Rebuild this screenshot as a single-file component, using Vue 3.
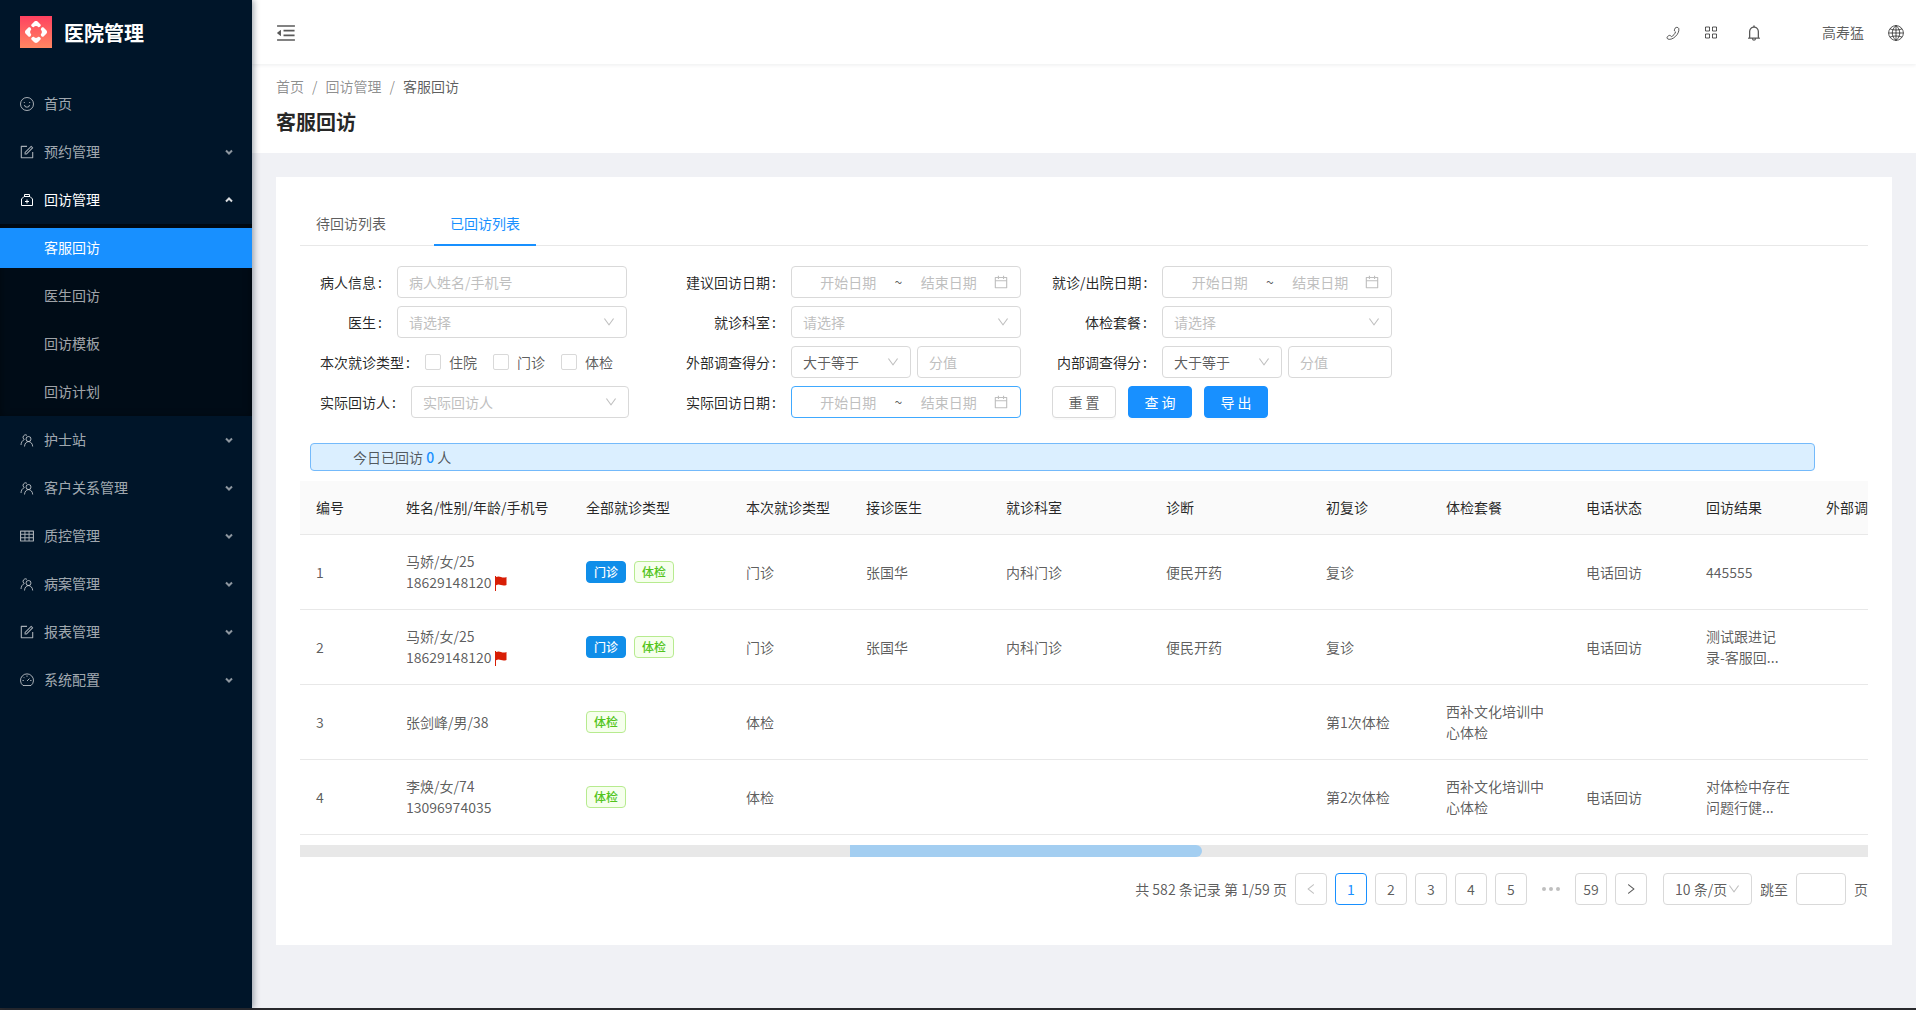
<script setup>
import { ref } from "vue";

const icons = {
  down: "M884 256h-75c-5.1 0-9.9 2.5-12.9 6.6L512 654.2 227.9 262.6c-3-4.1-7.8-6.6-12.9-6.6h-75c-6.5 0-10.3 7.4-6.5 12.7l352.6 486.1c12.8 17.6 39 17.6 51.7 0l352.6-486.1c3.9-5.3.1-12.7-6.4-12.7z",
  left: "M724 218.3V141c0-6.7-7.7-10.4-12.9-6.3L260.3 486.8c-16.4 12.8-16.4 37.5 0 50.3l450.8 352.1c5.3 4.1 12.9.4 12.9-6.3v-77.3c0-4.9-2.3-9.6-6.1-12.6l-360-281 360-281.1c3.8-3 6.1-7.7 6.1-12.6z",
  right:
    "M765.7 486.8L314.9 134.7A7.97 7.97 0 0 0 302 141v77.3c0 4.9 2.3 9.6 6.1 12.6l360 281.1-360 281.1c-3.9 3-6.1 7.7-6.1 12.6V883c0 6.7 7.7 10.4 12.9 6.3l450.8-352.1a31.96 31.96 0 0 0 0-50.4z",
  calendar:
    "M880 184H712v-64c0-4.4-3.6-8-8-8h-56c-4.4 0-8 3.6-8 8v64H384v-64c0-4.4-3.6-8-8-8h-56c-4.4 0-8 3.6-8 8v64H144c-17.7 0-32 14.3-32 32v664c0 17.7 14.3 32 32 32h736c17.7 0 32-14.3 32-32V216c0-17.7-14.3-32-32-32zm-40 656H184V460h656v380zM184 392V256h128v48c0 4.4 3.6 8 8 8h56c4.4 0 8-3.6 8-8v-48h256v48c0 4.4 3.6 8 8 8h56c4.4 0 8-3.6 8-8v-48h128v136H184z",
  fold: "M408 442h480c4.4 0 8-3.6 8-8v-56c0-4.4-3.6-8-8-8H408c-4.4 0-8 3.6-8 8v56c0 4.4 3.6 8 8 8zm-8 204c0 4.4 3.6 8 8 8h480c4.4 0 8-3.6 8-8v-56c0-4.4-3.6-8-8-8H408c-4.4 0-8 3.6-8 8v56zm504-486H120c-4.4 0-8 3.6-8 8v56c0 4.4 3.6 8 8 8h784c4.4 0 8-3.6 8-8v-56c0-4.4-3.6-8-8-8zm0 632H120c-4.4 0-8 3.6-8 8v56c0 4.4 3.6 8 8 8h784c4.4 0 8-3.6 8-8v-56c0-4.4-3.6-8-8-8zM115.4 518.9L271.7 642c5.8 4.6 14.4.5 14.4-6.9V388.9c0-7.4-8.5-11.5-14.4-6.9L115.4 505.1a8.74 8.74 0 0 0 0 13.8z",
  bell: "M816 768h-24V428c0-141.1-104.3-257.7-240-277.1V112c0-22.1-17.9-40-40-40s-40 17.9-40 40v38.9c-135.7 19.4-240 136-240 277.1v340h-24c-17.7 0-32 14.3-32 32v32c0 4.4 3.6 8 8 8h216c0 61.8 50.2 112 112 112s112-50.2 112-112h216c4.4 0 8-3.6 8-8v-32c0-17.7-14.3-32-32-32zM512 888c-26.5 0-48-21.5-48-48h96c0 26.5-21.5 48-48 48zM304 768V428c0-55.6 21.6-107.8 60.9-147.1S456.4 220 512 220c55.6 0 107.8 21.6 147.1 60.9S720 372.4 720 428v340H304z",
  form: "M904 512h-56c-4.4 0-8 3.6-8 8v320H184V184h320c4.4 0 8-3.6 8-8v-56c0-4.4-3.6-8-8-8H144c-17.7 0-32 14.3-32 32v736c0 17.7 14.3 32 32 32h736c17.7 0 32-14.3 32-32V520c0-4.4-3.6-8-8-8z M355.9 534.9L354 653.8c-.1 8.9 7.1 16.2 16 16.2h.4l118-2.9c2-.1 4-.9 5.4-2.3l415.9-415c3.1-3.1 3.1-8.2 0-11.3L785.4 114.3c-1.6-1.6-3.6-2.3-5.7-2.3s-4.1.8-5.7 2.3l-415.8 415a8.3 8.3 0 0 0-2.3 5.6zm63.5 23.6L779.7 199l45.2 45.1-360.5 359.7-45.7 1.1.7-46.4z",
  table:
    "M928 160H96c-17.7 0-32 14.3-32 32v640c0 17.7 14.3 32 32 32h832c17.7 0 32-14.3 32-32V192c0-17.7-14.3-32-32-32zm-40 208H676V232h212v136zm0 224H676V432h212v160zM412 432h200v160H412V432zm200-64H412V232h200v136zm-476 64h212v160H136V432zm0-200h212v136H136V232zm0 424h212v136H136V656zm276 0h200v136H412V656zm476 136H676V656h212v136z",
};

// icons drawn with strokes on a 14x14 grid
const lineIcons = {
  smile: "M7 .5a6.5 6.5 0 1 0 0 13a6.5 6.5 0 1 0 0-13z M4.3 5v1 M9.7 5v1 M4.5 8a2.5 2.2 0 0 0 5 0",
  medicine: "M1.5 12.5V6L4 3.5h6L12.5 6v6.5z M4.5 3.5v-2h5v2 M7 6.5v4 M5 8.5h4",
  team: "M8.5 3.5a2.5 2.5 0 1 0 0 5a2.5 2.5 0 1 0 0-5z M4.5 13.5c.2-3 1.8-4.9 4-4.9s4 1.900 4.200 4.900 M7 2.300a2.500 2.500 0 1 0-2.700 4.200C2.200 7.500 1.100 9.500 1 12",
  dashboard:
    "M3 12.500a6.500 6.500 0 1 1 8 0z M7 8l2.500-2.500 M7 2.500v1.300 M2.500 7.500h1.300 M10.200 7.500h1.300 M3.800 4.300l.8.8",
};

const menus = ref([
  { name: "首页", icon: "smile" },
  { name: "预约管理", icon: "form", sub: [] },
  {
    name: "回访管理",
    icon: "medicine",
    open: true,
    sub: ["客服回访", "医生回访", "回访模板", "回访计划"],
  },
  { name: "护士站", icon: "team", sub: [] },
  { name: "客户关系管理", icon: "team", sub: [] },
  { name: "质控管理", icon: "table", sub: [] },
  { name: "病案管理", icon: "team", sub: [] },
  { name: "报表管理", icon: "form", sub: [] },
  { name: "系统配置", icon: "dashboard", sub: [] },
]);
const activeMenu = ref("客服回访");

const tabs = ["待回访列表", "已回访列表"];
const activeTab = ref("已回访列表");

const filters = [
  { id: "patient", label: "病人信息", type: "input", placeholder: "病人姓名/手机号" },
  { id: "advise", label: "建议回访日期", type: "range" },
  { id: "visitDate", label: "就诊/出院日期", type: "range" },
  { id: "doctor", label: "医生", type: "select", placeholder: "请选择" },
  { id: "dept", label: "就诊科室", type: "select", placeholder: "请选择" },
  { id: "package", label: "体检套餐", type: "select", placeholder: "请选择" },
  { id: "visitType", label: "本次就诊类型", type: "checks", options: ["住院", "门诊", "体检"] },
  { id: "outer", label: "外部调查得分", type: "score" },
  { id: "inner", label: "内部调查得分", type: "score" },
  { id: "visitor", label: "实际回访人", type: "select", placeholder: "实际回访人" },
  { id: "realDate", label: "实际回访日期", type: "range", focused: true },
];

const columns = [
  { title: "编号", width: 90 },
  { title: "姓名/性别/年龄/手机号", width: 180 },
  { title: "全部就诊类型", width: 160 },
  { title: "本次就诊类型", width: 120 },
  { title: "接诊医生", width: 140 },
  { title: "就诊科室", width: 160 },
  { title: "诊断", width: 160 },
  { title: "初复诊", width: 120 },
  { title: "体检套餐", width: 140 },
  { title: "电话状态", width: 120 },
  { title: "回访结果", width: 120 },
  { title: "外部调查得分", width: 120 },
];

const rows = [
  {
    id: 1,
    name: "马娇/女/25",
    phone: "18629148120",
    flag: true,
    tags: ["门诊", "体检"],
    cells: ["门诊", "张国华", "内科门诊", "便民开药", "复诊", "", "电话回访", "445555", ""],
  },
  {
    id: 2,
    name: "马娇/女/25",
    phone: "18629148120",
    flag: true,
    tags: ["门诊", "体检"],
    cells: ["门诊", "张国华", "内科门诊", "便民开药", "复诊", "", "电话回访", "测试跟进记\n录-客服回...", ""],
  },
  {
    id: 3,
    name: "张剑峰/男/38",
    tags: ["体检"],
    cells: ["体检", "", "", "", "第1次体检", "西补文化培训中心体检", "", "", ""],
  },
  {
    id: 4,
    name: "李焕/女/74",
    phone: "13096974035",
    tags: ["体检"],
    cells: ["体检", "", "", "", "第2次体检", "西补文化培训中心体检", "电话回访", "对体检中存在\n问题行健...", ""],
  },
];

const page = ref(1);

function toggle(menu) {
  if (menu.sub) menu.open = !menu.open;
}
</script>

<template>
  <div class="layout">
    <aside class="sider">
      <div class="logo">
        <svg width="32" height="32" viewBox="0 0 32 32" aria-hidden="true">
          <defs>
            <linearGradient id="logo-bg" x1="0" y1="0" x2="0" y2="1">
              <stop offset="0" stop-color="#ff4160" />
              <stop offset="1" stop-color="#ff8762" />
            </linearGradient>
          </defs>
          <rect width="32" height="32" fill="url(#logo-bg)" />
          <g fill="#fff">
            <path
              v-for="deg in [0, 90, 180, 270]"
              :key="deg"
              :transform="`rotate(${deg} 16 16)`"
              d="M16 5c-1 0-1.600.5-2.300 1.200l-2 2c-.7.7-.6 1.500-.1 2.100c.5.600 1.300.900 2.100.900c.5-.7 1.300-1.100 2.300-1.100s1.800.4 2.300 1.100c.8 0 1.600-.3 2.100-.9c.5-.6.6-1.400-.1-2.100l-2-2C17.600 5.500 17 5 16 5z"
            />
          </g>
        </svg>
        <h1>医院管理</h1>
      </div>
      <nav class="menu">
        <template v-for="menu in menus" :key="menu.name">
          <button class="menu-item" :class="{ open: menu.open }" @click="toggle(menu)">
            <svg v-if="lineIcons[menu.icon]" class="line" width="14" height="14" viewBox="0 0 14 14">
              <path :d="lineIcons[menu.icon]" />
            </svg>
            <svg v-else width="14" height="14" viewBox="64 64 896 896">
              <path :d="icons[menu.icon]" />
            </svg>
            <span>{{ menu.name }}</span>
            <svg v-if="menu.sub" class="arrow" width="8" height="6" viewBox="0 0 8 6">
              <path :d="menu.open ? 'M1 4.500l3-3 3 3' : 'M1 1.500l3 3 3-3'" />
            </svg>
          </button>
          <div v-if="menu.open" class="submenu">
            <a
              v-for="item in menu.sub"
              :key="item"
              href="#"
              :class="{ active: item === activeMenu }"
              @click.prevent="activeMenu = item"
              >{{ item }}</a
            >
          </div>
        </template>
      </nav>
    </aside>

    <div class="main">
      <header class="topbar">
        <button class="icon-btn" aria-label="收起菜单">
          <svg width="20" height="20" viewBox="64 64 896 896"><path :d="icons.fold" /></svg>
        </button>
        <div class="tools">
          <button class="icon-btn phone" aria-label="电话">
            <svg class="line" width="14" height="14" viewBox="0 0 14 14">
              <path
                d="M9.500 1.700c1-.6 2.600-.4 3.200.6c.7 2.400-.6 5.700-3.200 8.100c-2.500 2.400-5.300 3.500-7.500 2.700c-1-.5-1.200-1.500-.7-2.300l1.500-1.200c.6-.4 1.300-.3 1.800.2l.9.8c2-1 3.400-2.600 4-4.700l-.8-.8c-.5-.6-.5-1.200-.1-1.800z"
              />
            </svg>
          </button>
          <button class="icon-btn apps" aria-label="应用">
            <svg class="line" width="14" height="14" viewBox="0 0 14 14">
              <path d="M1.500 1h4v4h-4z M8.500 1h4v4h-4z M1.500 8h4v4h-4z M8.500 8h4v4h-4z" />
            </svg>
          </button>
          <button class="icon-btn bell" aria-label="通知">
            <svg width="16" height="16" viewBox="64 64 896 896"><path :d="icons.bell" /></svg>
          </button>
          <span class="user">高寿猛</span>
          <button class="icon-btn" aria-label="语言">
            <svg class="line" width="16" height="16" viewBox="0 0 16 16">
              <path
                d="M8 .6a7.400 7.400 0 1 0 0 14.800A7.400 7.400 0 1 0 8 .6z M8 .6v14.800 M.6 8h14.800 M8 .6c-5 4.400-5 10.400 0 14.800 M8 .6c5 4.400 5 10.400 0 14.800 M2 3.900c3.500 1.500 8.500 1.500 12 0 M2 12.100c3.500-1.500 8.500-1.500 12 0"
              />
            </svg>
          </button>
        </div>
      </header>

      <section class="page-header">
        <nav class="breadcrumb">
          <a href="#">首页</a><i>/</i><a href="#">回访管理</a><i>/</i><span>客服回访</span>
        </nav>
        <h2>客服回访</h2>
      </section>

      <main class="card">
        <div class="tabs" role="tablist">
          <button
            v-for="tab in tabs"
            :key="tab"
            role="tab"
            :class="{ active: tab === activeTab }"
            :aria-selected="tab === activeTab"
            @click="activeTab = tab"
          >
            {{ tab }}
          </button>
        </div>

        <form class="filters" @submit.prevent>
          <div v-for="f in filters" :key="f.id" class="field">
            <label v-if="f.type !== 'checks'" class="label" :for="f.id">{{ f.label }}</label>
            <span v-else class="label">{{ f.label }}</span>

            <input v-if="f.type === 'input'" :id="f.id" class="box" :placeholder="f.placeholder" />

            <div v-else-if="f.type === 'select'" class="select">
              <select :id="f.id" class="box empty">
                <option>{{ f.placeholder }}</option>
              </select>
              <svg width="12" height="12" viewBox="64 64 896 896"><path :d="icons.down" /></svg>
            </div>

            <div v-else-if="f.type === 'range'" class="box range" :class="{ focused: f.focused }">
              <input :id="f.id" placeholder="开始日期" />
              <span>~</span>
              <input :aria-label="f.label + '结束'" placeholder="结束日期" />
              <svg width="14" height="14" viewBox="64 64 896 896"><path :d="icons.calendar" /></svg>
            </div>

            <div v-else-if="f.type === 'score'" class="score">
              <div class="select">
                <select :id="f.id" class="box">
                  <option>大于等于</option>
                </select>
                <svg width="12" height="12" viewBox="64 64 896 896"><path :d="icons.down" /></svg>
              </div>
              <input class="box" placeholder="分值" :aria-label="f.label + '分值'" />
            </div>

            <div v-else class="checks">
              <label v-for="o in f.options" :key="o"><input type="checkbox" />{{ o }}</label>
            </div>
          </div>
          <div class="actions">
            <button type="reset" class="btn">重 置</button>
            <button type="submit" class="btn primary">查 询</button>
            <button type="button" class="btn primary">导 出</button>
          </div>
        </form>

        <div class="summary">今日已回访 <b>0</b> 人</div>

        <div class="table-wrap">
          <table>
            <colgroup>
              <col v-for="c in columns" :key="c.title" :style="{ width: c.width + 'px' }" />
            </colgroup>
            <thead>
              <tr>
                <th v-for="c in columns" :key="c.title">{{ c.title }}</th>
              </tr>
            </thead>
            <tbody>
              <tr v-for="row in rows" :key="row.id">
                <td>{{ row.id }}</td>
                <td>
                  <div>{{ row.name }}</div>
                  <div v-if="row.phone" class="phone-line">
                    {{ row.phone }}
                    <svg v-if="row.flag" width="12" height="15" viewBox="0 0 12 15">
                      <path d="M0 0h1v1c2-.8 3.500-.6 5 0s3.500.8 5.500 0v8c-2 .9-3.800.7-5.500.1S3 8.300 1 9.200V15H0z" />
                    </svg>
                  </div>
                </td>
                <td>
                  <div class="tags">
                    <span v-for="tag in row.tags" :key="tag" class="tag" :class="{ blue: tag === '门诊' }">{{
                      tag
                    }}</span>
                  </div>
                </td>
                <td v-for="(cell, i) in row.cells" :key="i" class="text">{{ cell }}</td>
              </tr>
            </tbody>
          </table>
        </div>
        <div class="scroll-track"><div class="scroll-thumb"></div></div>

        <div class="pagination">
          <span class="total">共 582 条记录 第 1/59 页</span>
          <button disabled aria-label="上一页">
            <svg width="12" height="12" viewBox="64 64 896 896"><path :d="icons.left" /></svg>
          </button>
          <button v-for="n in 5" :key="n" :class="{ active: n === page }" @click="page = n">{{ n }}</button>
          <span class="ellipsis">
            <svg width="18" height="4" viewBox="0 0 18 4">
              <circle cx="2" cy="2" r="2" />
              <circle cx="9" cy="2" r="2" />
              <circle cx="16" cy="2" r="2" />
            </svg>
          </span>
          <button :class="{ active: page === 59 }" @click="page = 59">59</button>
          <button aria-label="下一页" @click="page++">
            <svg width="12" height="12" viewBox="64 64 896 896"><path :d="icons.right" /></svg>
          </button>
          <div class="select size">
            <select class="box" aria-label="每页条数">
              <option>10 条/页</option>
            </select>
            <svg width="12" height="12" viewBox="64 64 896 896"><path :d="icons.down" /></svg>
          </div>
          <label for="jump">跳至</label>
          <input id="jump" class="box jump" />
          <span>页</span>
        </div>
      </main>
    </div>
  </div>
</template>

<style>
body {
  margin: 0;
}
</style>

<style scoped>
* {
  box-sizing: border-box;
}
.layout {
  display: flex;
  min-height: 100vh;
  border-bottom: 2px solid #29292d;
  background: #f0f1f5;
  color: rgba(0, 0, 0, 0.65);
  font-family: "Noto Sans CJK SC", sans-serif;
  font-size: 14px;
  line-height: 21px;
}
button,
input,
select {
  font: inherit;
  color: inherit;
}
button {
  cursor: pointer;
}
svg {
  fill: currentColor;
  flex: none;
}
svg.line {
  fill: none;
  stroke: currentColor;
  stroke-width: 1;
}

/* sidebar */
.sider {
  position: relative;
  z-index: 2;
  flex: none;
  width: 252px;
  background: #001529;
  box-shadow: 2px 0 6px rgba(0, 21, 41, 0.35);
}
.logo {
  display: flex;
  align-items: center;
  gap: 12px;
  height: 64px;
  padding-left: 20px;
}
.logo h1 {
  margin: 0;
  color: #fff;
  font-size: 20px;
  font-weight: 700;
}
.menu {
  padding-top: 16px;
}
.menu-item {
  display: flex;
  align-items: center;
  gap: 10px;
  width: 100%;
  height: 48px;
  padding: 0 19px 1px 20px;
  border: 0;
  background: none;
  color: rgba(255, 255, 255, 0.65);
}
.menu-item.open {
  color: #fff;
}
.arrow {
  margin-left: auto;
  fill: none;
  stroke: currentColor;
  stroke-width: 2;
  opacity: 0.85;
}
.submenu {
  background: #000c17;
  box-shadow: inset 0 2px 8px rgba(0, 0, 0, 0.45);
  padding: 4px 0;
  display: flex;
  flex-direction: column;
  gap: 8px;
}
.submenu a {
  height: 40px;
  padding-left: 44px;
  line-height: 38px;
  color: rgba(255, 255, 255, 0.65);
  text-decoration: none;
}
.submenu a.active {
  background: #1890ff;
  color: #fff;
}

/* top bar */
.main {
  flex: 1;
  min-width: 0;
}
.topbar {
  position: relative;
  z-index: 1;
  display: flex;
  align-items: center;
  justify-content: space-between;
  height: 64px;
  padding: 2px 12px 0 24px;
  background: #fff;
  box-shadow: 0 1px 4px rgba(0, 21, 41, 0.08);
}
.icon-btn {
  display: flex;
  padding: 0;
  border: 0;
  background: none;
}
.tools {
  display: flex;
  align-items: center;
}
.phone {
  margin-right: 24px;
}
.apps {
  margin-right: 28px;
}
.bell {
  margin-right: 60px;
}
.user {
  margin-right: 24px;
  padding-bottom: 2px;
}
.page-header {
  padding: 11px 24px 15px;
  background: #fff;
}
.breadcrumb {
  line-height: 22px;
}
.breadcrumb a {
  color: rgba(0, 0, 0, 0.45);
  text-decoration: none;
}
.breadcrumb i {
  margin: 0 8px;
  color: rgba(0, 0, 0, 0.45);
  font-style: normal;
}
.page-header h2 {
  margin: 9px 0 0;
  color: rgba(0, 0, 0, 0.85);
  font-size: 20px;
  line-height: 32px;
}
.card {
  margin: 24px;
  padding: 24px 24px 40px;
  background: #fff;
}

/* tabs */
.tabs {
  display: flex;
  gap: 32px;
  border-bottom: 1px solid #e8e8e8;
}
.tabs button {
  height: 45px;
  margin-bottom: -1px;
  padding: 2px 16px 0;
  border: 0;
  border-bottom: 2px solid transparent;
  background: none;
}
.tabs button.active {
  border-color: #1890ff;
  color: #1890ff;
}

/* filters */
.filters {
  display: grid;
  grid-template-columns: repeat(3, minmax(340px, 366px));
  row-gap: 8px;
  margin: 20px 20px 0;
}
.field {
  display: flex;
  align-items: center;
}
.label {
  flex: none;
  min-width: 77px;
  color: rgba(0, 0, 0, 0.85);
  text-align: right;
}
.field:nth-child(3n + 2) .label {
  min-width: 105px;
}
.field:nth-child(3n) .label {
  min-width: 110px;
}
.label::after {
  content: ":";
  margin: 0 15px 0 2px;
}
.box {
  width: 230px;
  height: 32px;
  padding: 0 11px;
  border: 1px solid #d9d9d9;
  border-radius: 4px;
  outline: 0;
  background: #fff;
}
input::placeholder {
  color: #bfbfbf;
}
.select {
  position: relative;
  width: 230px;
}
.select .box {
  width: 100%;
  appearance: none;
}
.select .empty {
  color: #bfbfbf;
}
.select svg {
  position: absolute;
  top: 10px;
  right: 12px;
  color: #bfbfbf;
  pointer-events: none;
}
.field:nth-child(10) .select {
  width: 218px;
}
.range {
  display: flex;
  align-items: center;
  padding-right: 12px;
}
.range input {
  flex: 1;
  min-width: 0;
  padding: 0;
  border: 0;
  outline: 0;
  background: none;
  text-align: center;
}
.range span {
  width: 10px;
  text-align: center;
}
.range svg {
  color: #bfbfbf;
}
.range.focused {
  border-color: #40a9ff;
}
.score {
  display: flex;
  gap: 6px;
  width: 230px;
}
.score .select {
  width: 120px;
}
.score > .box {
  width: 104px;
}
.checks {
  display: flex;
  gap: 16px;
}
.checks label {
  display: flex;
  align-items: center;
  gap: 8px;
}
.checks input {
  width: 16px;
  height: 16px;
  margin: 0;
  border: 1px solid #d9d9d9;
  border-radius: 2px;
  appearance: none;
}
.checks input:checked {
  border-color: #1890ff;
  background: #1890ff;
}
.actions {
  display: flex;
  gap: 12px;
}
.btn {
  width: 64px;
  height: 32px;
  padding: 0;
  border: 1px solid #d9d9d9;
  border-radius: 4px;
  background: #fff;
  box-shadow: 0 2px 0 rgba(0, 0, 0, 0.02);
}
.btn.primary {
  border-color: #1890ff;
  background: #1890ff;
  color: #fff;
}

.summary {
  margin: 25px 53px 10px 10px;
  padding: 0 42px;
  border: 1px solid #74bafb;
  border-radius: 4px;
  background: #dbefff;
  line-height: 26px;
}
.summary b {
  color: #1890ff;
  font-weight: 500;
}

/* table */
.table-wrap {
  overflow: hidden;
}
table {
  width: 1630px;
  table-layout: fixed;
  border-collapse: separate;
  border-spacing: 0;
}
th {
  height: 54px;
  padding: 0 16px;
  border-bottom: 1px solid #e8e8e8;
  background: #fafafa;
  color: rgba(0, 0, 0, 0.85);
  font-weight: 400;
  text-align: left;
  white-space: nowrap;
}
td {
  height: 75px;
  padding: 0 16px;
  border-bottom: 1px solid #e8e8e8;
}
td.text {
  white-space: pre-line;
}
.phone-line {
  display: flex;
  align-items: center;
  gap: 4px;
}
.phone-line svg {
  margin-top: 2px;
  color: #d81e06;
}
.tags {
  display: flex;
  gap: 8px;
}
.tag {
  padding: 0 7px;
  border: 1px solid #b7eb8f;
  border-radius: 4px;
  background: #f6ffed;
  color: #52c41a;
  font-size: 12px;
  font-weight: 500;
  line-height: 20px;
}
.tag.blue {
  border-color: #108ee9;
  background: #108ee9;
  color: #fff;
}
.scroll-track {
  height: 12px;
  margin-top: 10px;
  padding: 0 42.5% 0 35.1%;
  background: #e8e8e8;
}
.scroll-thumb {
  height: 12px;
  border-radius: 0 6px 6px 0;
  background: #a3cef1;
}

.pagination {
  display: flex;
  align-items: center;
  justify-content: flex-end;
  gap: 8px;
  margin-top: 16px;
}
.pagination button {
  display: flex;
  align-items: center;
  justify-content: center;
  width: 32px;
  height: 32px;
  padding: 0;
  border: 1px solid #d9d9d9;
  border-radius: 4px;
  background: #fff;
}
.pagination button.active {
  border-color: #1890ff;
  color: #1890ff;
}
.pagination button:disabled {
  color: rgba(0, 0, 0, 0.25);
}
.ellipsis {
  display: flex;
  justify-content: center;
  width: 32px;
  color: rgba(0, 0, 0, 0.25);
}
.size {
  width: 89px;
  margin-left: 8px;
}
.jump {
  width: 50px;
}
</style>
